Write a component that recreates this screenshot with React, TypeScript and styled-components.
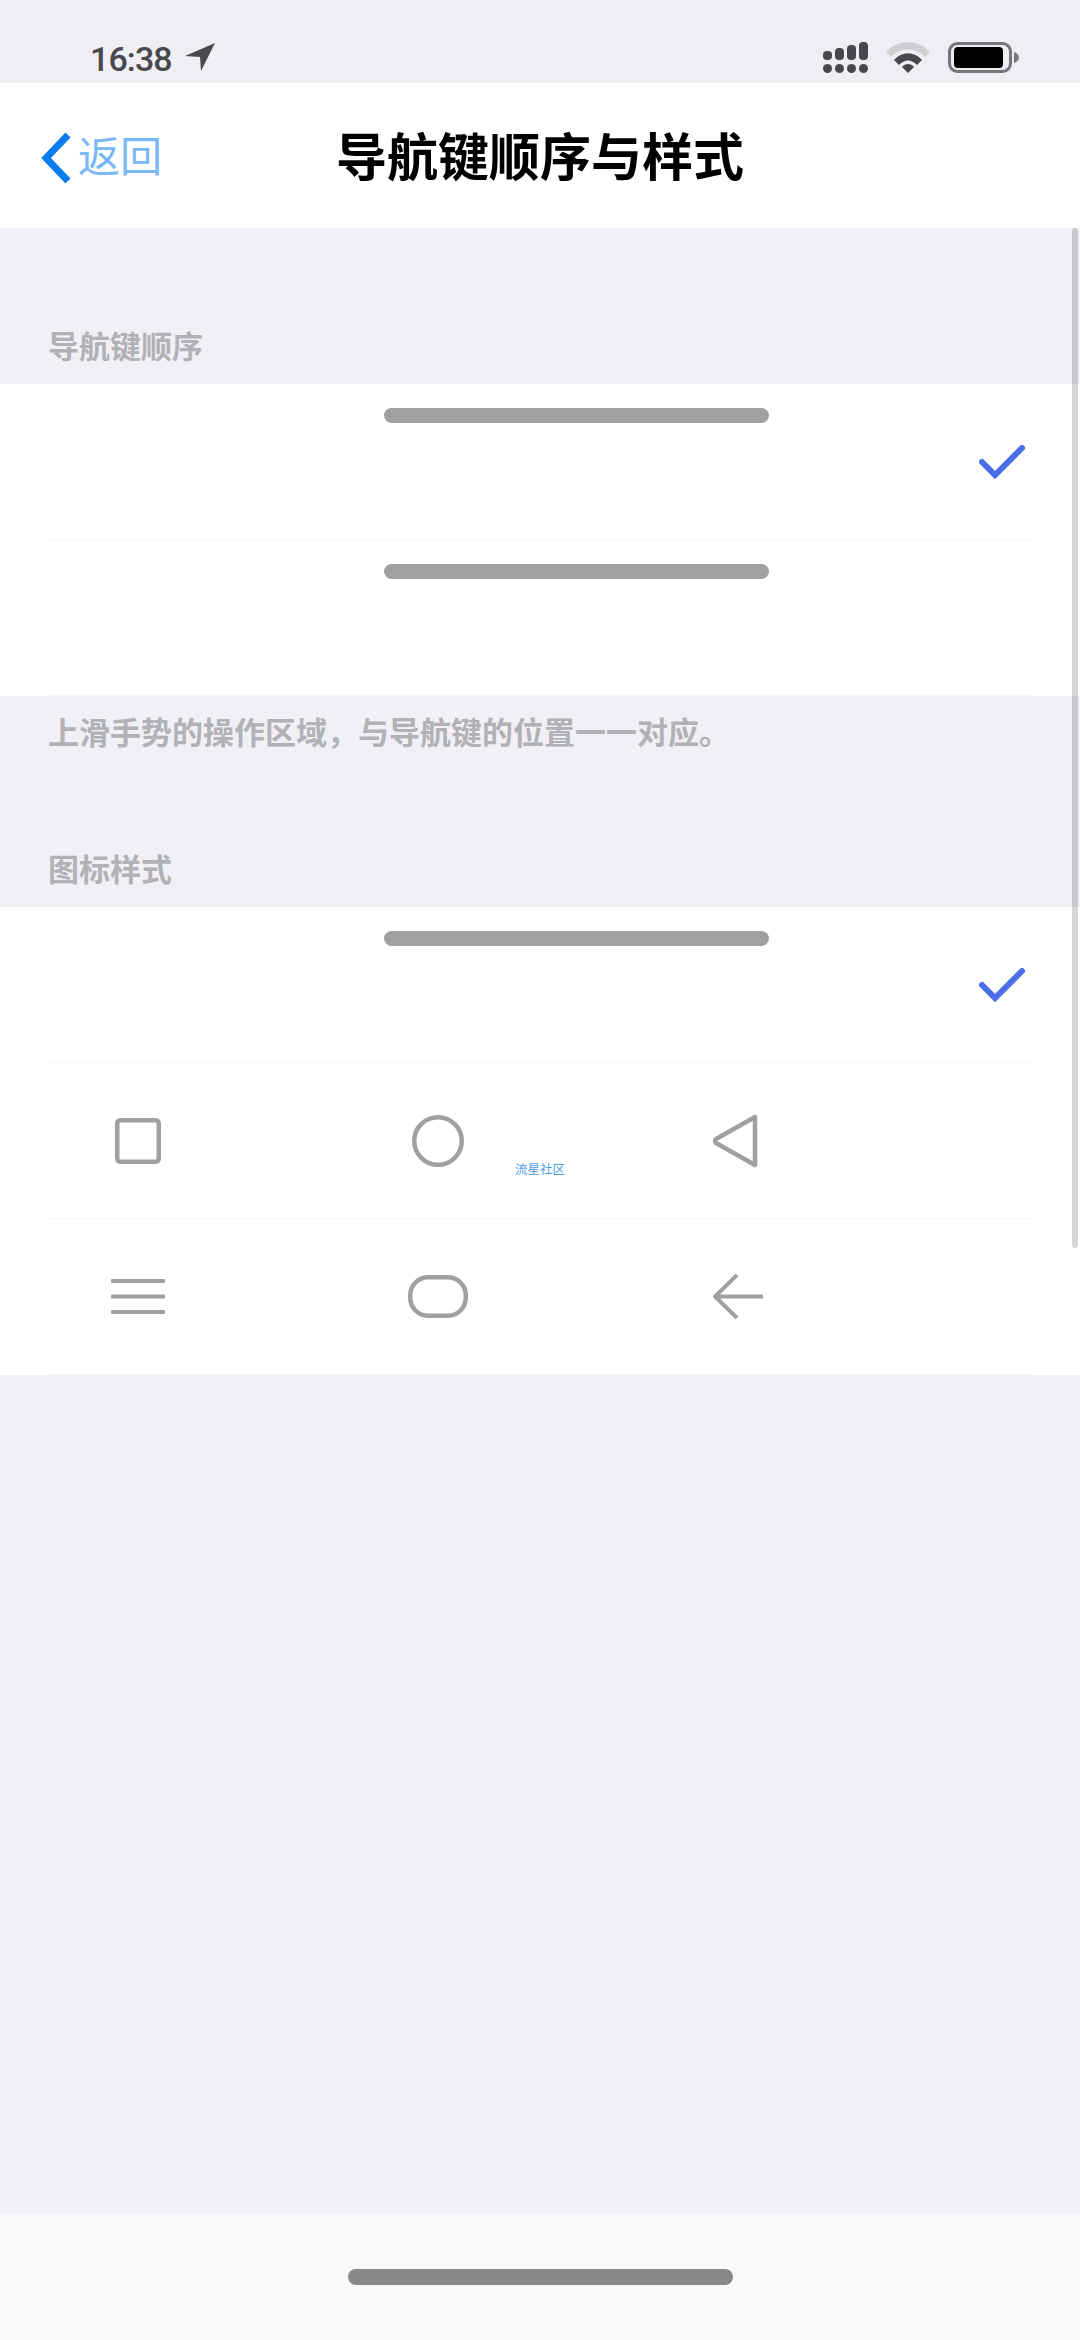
import React from "react";
import styled, { createGlobalStyle } from "styled-components";

const GlobalStyle = createGlobalStyle`
  html, body {
    margin: 0;
    padding: 0;
    background: #f0f0f6;
  }
  * {
    box-sizing: border-box;
  }
`;

const FONT = `"Liberation Sans", "Noto Sans CJK SC", sans-serif`;
const ICON_GREY = "#a0a0a0";
const NOTE_TEXT = "上滑手势的操作区域\uFF0C与导航键的位置一一对应。";

const App: React.FC = () => {
  return (
    <Page>
      <GlobalStyle />
      <StatusBar>
        <StatusLeft>
          <Time>16:38</Time>
          <LocationIcon />
        </StatusLeft>
        <StatusRight>
          <SignalIcon />
          <WifiIcon />
          <BatteryIcon />
        </StatusRight>
      </StatusBar>

      <NavBar>
        <BackLink>
          <svg width="32" height="54" viewBox="0 0 32 54">
            <path d="M28 4 L6 27 L28 50" fill="none" stroke="#0a7cf0" strokeWidth="7" />
          </svg>
          <BackText>返回</BackText>
        </BackLink>
        <Title>导航键顺序与样式</Title>
      </NavBar>

      <Content>
        <SectionLabel $top={100}>导航键顺序</SectionLabel>
        <List>
          <Row>
            <GestureBar />
            <CheckIcon />
          </Row>
          <Row>
            <GestureBar />
          </Row>
        </List>
        <Note>{NOTE_TEXT}</Note>

        <SectionLabel $top={79}>图标样式</SectionLabel>
        <List>
          <Row>
            <GestureBar />
            <CheckIcon />
          </Row>
          <Row>
            <IconSlot $width={180}>
              <SquareIcon />
            </IconSlot>
            <IconSlot $width={420}>
              <CircleIcon />
            </IconSlot>
            <IconSlot $width={180}>
              <TriangleIcon />
            </IconSlot>
          </Row>
          <Row>
            <IconSlot $width={180}>
              <MenuIcon />
            </IconSlot>
            <IconSlot $width={420}>
              <PillIcon />
            </IconSlot>
            <IconSlot $width={180}>
              <ArrowIcon />
            </IconSlot>
          </Row>
        </List>
      </Content>

      <BottomBar>
        <HomeIndicator />
      </BottomBar>

      <Scrollbar />
      <Watermark>流星社区</Watermark>
    </Page>
  );
};

const LocationIcon = () => (
  <svg width="30" height="28" viewBox="0 0 30 28">
    <path d="M30 0 L0 13 L15 14 L16 28 Z" fill="#4a4a4e" />
  </svg>
);

const SignalIcon = () => (
  <svg width="45" height="31" viewBox="0 0 45 31">
    <g fill="#48484c">
      <rect x="0" y="9" width="9" height="9" rx="4" />
      <rect x="12" y="6" width="9" height="12" rx="4" />
      <rect x="24" y="3" width="9" height="15" rx="4" />
      <rect x="36" y="0" width="9" height="18" rx="4" />
      <circle cx="4.5" cy="26.5" r="4.5" />
      <circle cx="16.5" cy="26.5" r="4.5" />
      <circle cx="28.5" cy="26.5" r="4.5" />
      <circle cx="40.5" cy="26.5" r="4.5" />
    </g>
  </svg>
);

const WifiIcon = () => (
  <svg width="44" height="31" viewBox="0 0 44 31">
    <path d="M0 10 C12 -3 32 -3 44 10 L39 15 C29 5 15 5 5 15 Z" fill="#cfcfd1" />
    <path d="M8 18 C16 9 28 9 36 18 L31 23 C25 17 19 17 13 23 Z" fill="#48484c" />
    <path d="M16 25 C19 21 25 21 28 25 L22 31 Z" fill="#48484c" />
  </svg>
);

const BatteryIcon = () => (
  <svg width="71" height="31" viewBox="0 0 71 31">
    <rect x="1.5" y="1.5" width="61" height="28" rx="8" fill="none" stroke="#77777a" strokeWidth="3" />
    <rect x="6" y="5" width="49" height="21" rx="4" fill="#000" />
    <path d="M66 10 C69 11 71 13 71 15.5 C71 18 69 20 66 21 Z" fill="#77777a" />
  </svg>
);

const CheckIcon = () => (
  <CheckSvg width="46" height="34" viewBox="0 0 46 34">
    <path
      d="M3 17 L16 30 L43 3"
      fill="none"
      stroke="#4a6ee8"
      strokeWidth="6"
      strokeLinecap="round"
    />
  </CheckSvg>
);

const SquareIcon = () => (
  <svg width="46" height="46" viewBox="0 0 46 46">
    <rect x="2.25" y="2.25" width="41.5" height="41.5" rx="3" fill="none" stroke={ICON_GREY} strokeWidth="4.5" />
  </svg>
);

const CircleIcon = () => (
  <svg width="52" height="52" viewBox="0 0 52 52">
    <circle cx="26" cy="26" r="23.75" fill="none" stroke={ICON_GREY} strokeWidth="4.5" />
  </svg>
);

const TriangleIcon = () => (
  <svg width="50" height="54" viewBox="0 0 50 54">
    <path
      d="M42 3 L42 51 L3 29 Q1 27 3 25 Z"
      fill="none"
      stroke={ICON_GREY}
      strokeWidth="4.5"
      strokeLinejoin="round"
    />
  </svg>
);

const MenuIcon = () => (
  <svg width="54" height="35" viewBox="0 0 54 35">
    <g fill={ICON_GREY}>
      <rect x="0" y="0" width="54" height="4" rx="1" />
      <rect x="0" y="15.5" width="54" height="4" rx="1" />
      <rect x="0" y="31" width="54" height="4" rx="1" />
    </g>
  </svg>
);

const PillIcon = () => (
  <svg width="60" height="43" viewBox="0 0 60 43">
    <rect x="2.25" y="2.25" width="55.5" height="38.5" rx="18" fill="none" stroke={ICON_GREY} strokeWidth="4.5" />
  </svg>
);

const ArrowIcon = () => (
  <svg width="50" height="45" viewBox="0 0 50 45">
    <path
      d="M24 1 L2 22.5 L24 44 M2 22.5 L50 22.5"
      fill="none"
      stroke={ICON_GREY}
      strokeWidth="4"
    />
  </svg>
);

const Page = styled.div`
  position: relative;
  width: 1080px;
  height: 2340px;
  display: flex;
  flex-direction: column;
  overflow: hidden;
  background: #f0f0f6;
  font-family: ${FONT};
`;

const StatusBar = styled.div`
  height: 83px;
  padding: 31px 61px 0 90px;
  display: flex;
  justify-content: space-between;
  background: #eeeef3;
`;

const StatusLeft = styled.div`
  display: flex;
  align-items: center;
  gap: 13px;
  height: 52px;
`;

const Time = styled.span`
  padding-top: 3px;
  font-family: Roboto, sans-serif;
  font-size: 34px;
  font-weight: 500;
  letter-spacing: -0.9px;
  color: #48484c;
`;

const StatusRight = styled.div`
  display: flex;
  align-items: center;
  gap: 18px;
  height: 52px;
`;

const NavBar = styled.div`
  position: relative;
  height: 145px;
  padding-top: 6px;
  display: flex;
  align-items: center;
  justify-content: center;
  background: #fff;
`;

const BackLink = styled.div`
  position: absolute;
  left: 40px;
  top: 47px;
  display: flex;
  align-items: center;
  gap: 6px;
`;

const BackText = styled.span`
  padding-top: 1px;
  font-size: 42px;
  line-height: 54px;
  color: #7ab8f4;
`;

const Title = styled.h1`
  margin: 0;
  font-size: 51px;
  line-height: 60px;
  font-weight: 700;
  color: #000;
`;

const Content = styled.main`
  flex: 1;
  display: flex;
  flex-direction: column;
`;

const SectionLabel = styled.div<{ $top: number }>`
  margin-top: ${(props) => props.$top}px;
  padding: 0 48px 24px;
  height: 56px;
  display: flex;
  align-items: center;
  font-size: 31px;
  font-weight: 700;
  color: #b2b2b6;
`;

const Note = styled.div`
  padding: 0 48px 8px;
  height: 76px;
  display: flex;
  align-items: center;
  font-size: 31px;
  font-weight: 700;
  color: #b2b2b6;
`;

const List = styled.section`
  background: #fff;
`;

const Row = styled.div`
  height: 156px;
  margin: 0 48px;
  display: flex;
  align-items: center;
  border-bottom: 1px solid #f6f6f6;
`;

const GestureBar = styled.div`
  align-self: flex-start;
  width: 385px;
  height: 15px;
  margin: 24px 0 0 336px;
  border-radius: 7.5px;
  background: ${ICON_GREY};
`;

const CheckSvg = styled.svg`
  margin-left: auto;
  margin-right: 7px;
`;

const IconSlot = styled.div<{ $width: number }>`
  width: ${(props) => props.$width}px;
  display: flex;
  justify-content: center;
  align-items: center;
`;

const BottomBar = styled.footer`
  height: 126px;
  display: flex;
  justify-content: center;
  padding-top: 55px;
  background: #f9f9f9;
`;

const HomeIndicator = styled.div`
  width: 385px;
  height: 16px;
  border-radius: 8px;
  background: #888;
`;

const Scrollbar = styled.div`
  position: absolute;
  top: 228px;
  right: 2px;
  width: 6px;
  height: 1020px;
  border-radius: 3px;
  background: rgba(0, 0, 0, 0.16);
`;

const Watermark = styled.div`
  position: absolute;
  top: 1162px;
  left: 515px;
  width: 50px;
  font-size: 12.5px;
  line-height: 16px;
  white-space: nowrap;
  color: #4f9ae8;
`;

export default App;
